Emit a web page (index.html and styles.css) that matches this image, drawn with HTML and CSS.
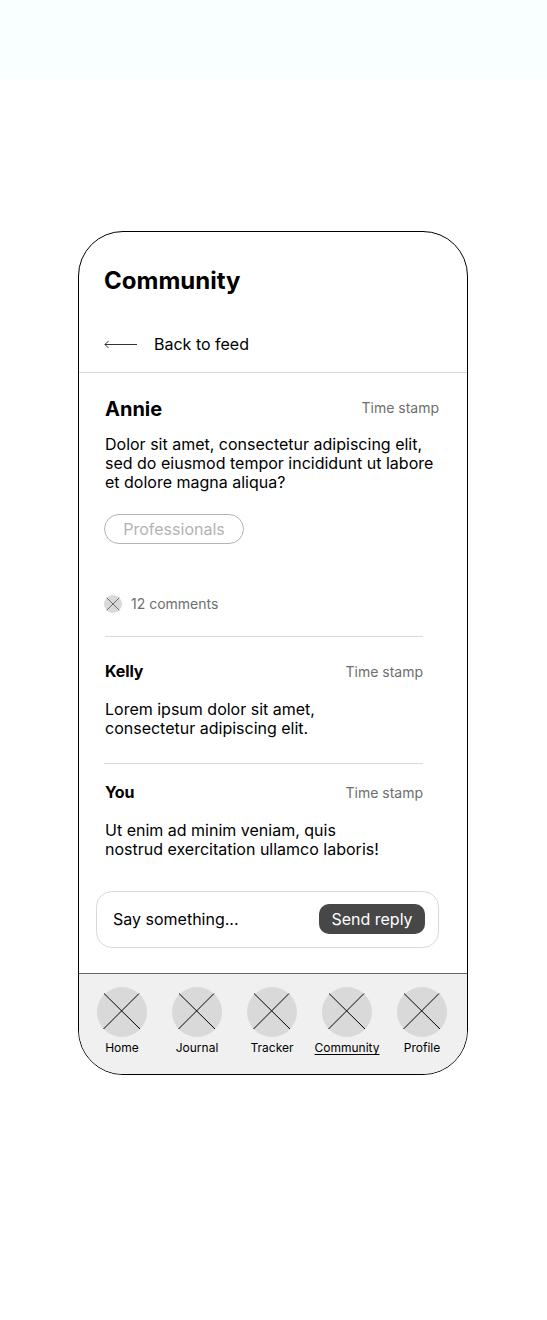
FILE: index.html
```
<!DOCTYPE html>
<html lang="en">
<head>
    <meta charset="UTF-8">
    <meta name="viewport" content="width=device-width, initial-scale=1.0">
    <title>Community</title>
    <link rel="stylesheet" href="styles.css">
</head>
<body>
    <div class="banner"></div>
    <div class="phone">
        <header class="header">
            <h1>Community</h1>
            <a class="back">
                <svg class="arrow" width="34" height="9" viewBox="0 0 34 9">
                    <path d="M33 4.5H1M4.5 1L1 4.5L4.5 8" />
                </svg>
                <span>Back to feed</span>
            </a>
        </header>

        <main class="thread">
            <article class="post">
                <div class="post-head">
                    <h2>Annie</h2>
                    <span class="time">Time stamp</span>
                </div>
                <p>Dolor sit amet, consectetur adipiscing elit,<br>sed do eiusmod tempor incididunt ut labore<br>et dolore magna aliqua?</p>
                <span class="tag">Professionals</span>
                <div class="comment-count">
                    <svg width="18" height="18" viewBox="0 0 18 18">
                        <circle cx="9" cy="9" r="9" />
                        <path d="M2.7 2.7L15.3 15.3M15.3 2.7L2.7 15.3" />
                    </svg>
                    <span>12 comments</span>
                </div>
            </article>

            <article class="comment">
                <div class="comment-head">
                    <h3>Kelly</h3>
                    <span class="time">Time stamp</span>
                </div>
                <p>Lorem ipsum dolor sit amet,<br>consectetur adipiscing elit.</p>
            </article>

            <article class="comment own">
                <div class="comment-head">
                    <h3>You</h3>
                    <span class="time">Time stamp</span>
                </div>
                <p>Ut enim ad minim veniam, quis<br>nostrud exercitation ullamco laboris!</p>
            </article>

            <div class="reply">
                <span>Say something...</span>
                <button>Send reply</button>
            </div>
        </main>

        <nav class="nav">
            <a class="nav-item">
                <svg width="50" height="50" viewBox="0 0 50 50">
                    <circle cx="25" cy="25" r="25" />
                    <path d="M7 6.5L43 42M42 6.5L6.5 42" />
                </svg>
                <span>Home</span>
            </a>
            <a class="nav-item">
                <svg width="50" height="50" viewBox="0 0 50 50">
                    <circle cx="25" cy="25" r="25" />
                    <path d="M7 6.5L43 42M42 6.5L6.5 42" />
                </svg>
                <span>Journal</span>
            </a>
            <a class="nav-item">
                <svg width="50" height="50" viewBox="0 0 50 50">
                    <circle cx="25" cy="25" r="25" />
                    <path d="M7 6.5L43 42M42 6.5L6.5 42" />
                </svg>
                <span>Tracker</span>
            </a>
            <a class="nav-item active">
                <svg width="50" height="50" viewBox="0 0 50 50">
                    <circle cx="25" cy="25" r="25" />
                    <path d="M7 6.5L43 42M42 6.5L6.5 42" />
                </svg>
                <span>Community</span>
            </a>
            <a class="nav-item">
                <svg width="50" height="50" viewBox="0 0 50 50">
                    <circle cx="25" cy="25" r="25" />
                    <path d="M7 6.5L43 42M42 6.5L6.5 42" />
                </svg>
                <span>Profile</span>
            </a>
        </nav>
    </div>
</body>
</html>
```
FILE: styles.css
```
* {
    box-sizing: border-box;
    margin: 0;
    padding: 0;
}

body {
    font-family: 'Inter', sans-serif;
    font-size: 16px;
    line-height: 19px;
    color: #000;
    background-color: #fff;
    min-height: 1320px;
}

svg {
    display: block;
    flex-shrink: 0;
}

.banner {
    height: 78px;
    background-color: #f9fffe;
}

.phone {
    display: flex;
    flex-direction: column;
    width: 390px;
    height: 844px;
    margin: 153px 0 0 78px;
    border: 1px solid #000;
    border-radius: 45px;
    overflow: hidden;
}

/* Header */
.header {
    height: 141px;
    padding: 34px 25px 0;
    border-bottom: 1px solid #d9d9d9;
}

.header h1 {
    font-size: 24px;
    line-height: 29px;
    font-weight: 700;
}

.back {
    display: flex;
    align-items: center;
    gap: 16px;
    margin-top: 40px;
}

.arrow path {
    fill: none;
    stroke: #000;
    stroke-width: 0.8;
}

/* Thread */
.thread {
    flex: 1;
    padding: 24px 28px 0 26px;
}

.post-head,
.comment-head {
    display: flex;
    justify-content: space-between;
    align-items: center;
}

.post-head h2 {
    font-size: 20px;
    line-height: 24px;
    font-weight: 700;
}

.time {
    font-size: 14px;
    line-height: 17px;
    color: #6e6e6e;
}

.post-head .time {
    margin-bottom: 3px;
}

.post p {
    margin-top: 14px;
}

.tag {
    display: flex;
    align-items: center;
    justify-content: center;
    width: 140px;
    height: 30px;
    margin: 22px 0 0 -1px;
    border: 1px solid #b3b3b3;
    border-radius: 15px;
    color: #b3b3b3;
}

.comment-count {
    display: flex;
    align-items: center;
    gap: 9px;
    height: 18px;
    margin: 51px 0 23px -1px;
    font-size: 14px;
    line-height: 17px;
    color: #6e6e6e;
}

.comment-count span {
    margin-bottom: 1px;
}

.comment-count circle {
    fill: #d9d9d9;
}

.comment-count path {
    stroke: #6e6e6e;
}

.comment {
    height: 127px;
    margin-right: 16px;
    padding-top: 25px;
    border-top: 1px solid #d9d9d9;
}

.comment h3 {
    font-size: 16px;
    font-weight: 700;
    letter-spacing: -0.1px;
}

.comment p {
    margin-top: 19px;
}

.comment.own {
    height: 128px;
    margin-left: -1px;
    padding: 19px 0 0 1px;
}

.reply {
    display: flex;
    justify-content: space-between;
    align-items: center;
    height: 57px;
    margin-left: -9px;
    padding: 0 13px 0 16px;
    border: 1px solid #d9d9d9;
    border-radius: 16px;
}

.reply button {
    width: 106px;
    height: 30px;
    margin-bottom: 1px;
    border: none;
    border-radius: 10px;
    background-color: #474747;
    color: #fff;
    font-family: inherit;
    font-size: 16px;
}

/* Bottom navigation */
.nav {
    display: flex;
    gap: 25px;
    height: 101px;
    padding: 13px 0 0 18px;
    border-top: 1px solid #666;
    background-color: #f0f0f0;
}

.nav-item {
    display: flex;
    flex-direction: column;
    align-items: center;
    width: 50px;
    font-size: 12px;
    line-height: 15px;
}

.nav-item circle {
    fill: #d9d9d9;
}

.nav-item path {
    stroke: #000;
}

.nav-item span {
    margin-top: 3px;
}

.nav-item.active span {
    text-decoration: underline;
    text-decoration-thickness: 1px;
    text-underline-offset: 2px;
    text-decoration-skip-ink: none;
}
```
